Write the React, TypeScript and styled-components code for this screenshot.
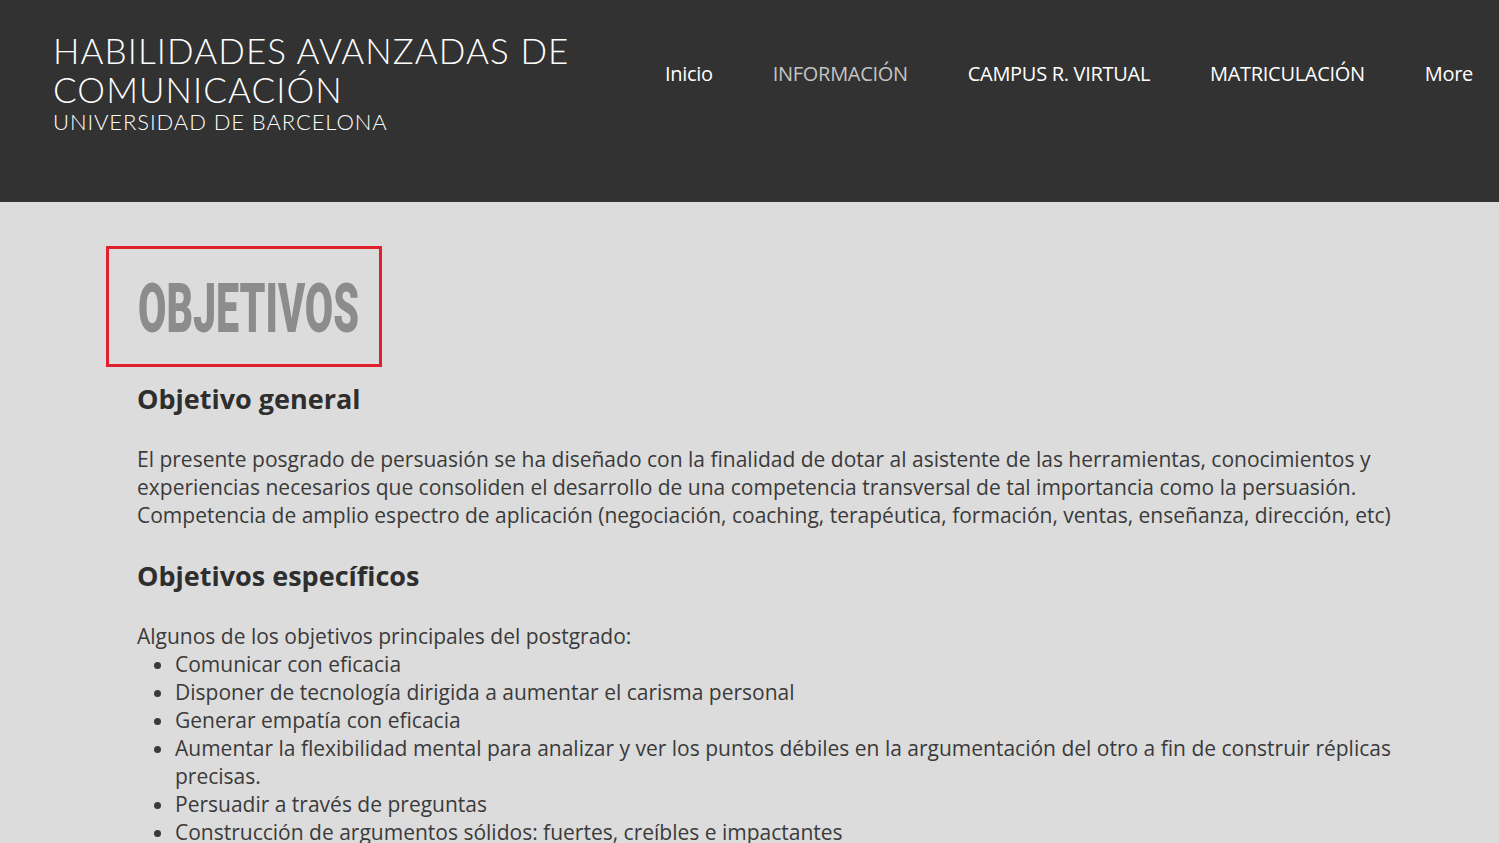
import styled, { createGlobalStyle } from "styled-components";

const GlobalStyle = createGlobalStyle`
  html, body {
    margin: 0;
    padding: 0;
    background: #dcdcdc;
  }
  * {
    box-sizing: border-box;
  }
`;

const navItems = [
  { label: "Inicio", active: false },
  { label: "INFORMACIÓN", active: true },
  { label: "CAMPUS R. VIRTUAL", active: false },
  { label: "MATRICULACIÓN", active: false },
  { label: "More", active: false },
];

const objetivos = [
  "Comunicar con eficacia",
  "Disponer de tecnología dirigida a aumentar el carisma personal",
  "Generar empatía con eficacia",
  "Aumentar la flexibilidad mental para analizar y ver los puntos débiles en la argumentación del otro a fin de construir réplicas precisas.",
  "Persuadir a través de preguntas",
  "Construcción de argumentos sólidos: fuertes, creíbles e impactantes",
];

export default function App() {
  return (
    <>
      <GlobalStyle />
      <Page>
        <Header>
          <Brand>
            <SiteTitle>
              HABILIDADES AVANZADAS DE
              <br />
              COMUNICACIÓN
            </SiteTitle>
            <SiteSubtitle>UNIVERSIDAD DE BARCELONA</SiteSubtitle>
          </Brand>
          <Nav>
            {navItems.map((item) => (
              <NavLink key={item.label} $active={item.active}>
                {item.label}
              </NavLink>
            ))}
          </Nav>
        </Header>

        <Main>
          <TitleBox>
            <BigTitle>OBJETIVOS</BigTitle>
          </TitleBox>

          <Content>
            <Heading>Objetivo general</Heading>
            <Paragraph>
              El presente posgrado de persuasión se ha diseñado con la
              finalidad de dotar al asistente de las herramientas,
              conocimientos y experiencias necesarios que consoliden el
              desarrollo de una competencia transversal de tal importancia
              como la persuasión. Competencia de amplio espectro de aplicación
              (negociación, coaching, terapéutica, formación, ventas,
              enseñanza, dirección, etc)
            </Paragraph>

            <Heading>Objetivos específicos</Heading>
            <Intro>Algunos de los objetivos principales del postgrado:</Intro>
            <List>
              {objetivos.map((o) => (
                <li key={o}>{o}</li>
              ))}
            </List>
          </Content>
        </Main>
      </Page>
    </>
  );
}

const Page = styled.div`
  min-height: 843px;
  background: #dcdcdc;
`;

const Header = styled.header`
  height: 202px;
  background-color: #323232;
  display: flex;
  justify-content: space-between;
  align-items: flex-start;
  padding: 31px 26px 0 53px;
`;

const Brand = styled.div`
  display: flex;
  flex-direction: column;
  color: #ffffff;
  font-family: "Lato", "Open Sans", sans-serif;
  font-weight: 300;
`;

const SiteTitle = styled.h1`
  margin: 0;
  font-size: 35px;
  font-weight: 300;
  line-height: 39px;
  letter-spacing: 1.1px;
`;

const SiteSubtitle = styled.div`
  font-size: 22px;
  line-height: 26px;
  letter-spacing: 0.9px;
  margin-top: 0;
`;

const Nav = styled.nav`
  display: flex;
  gap: 60px;
  padding-top: 28px;
`;

const NavLink = styled.a<{ $active: boolean }>`
  font-family: "Open Sans", sans-serif;
  font-size: 20px;
  letter-spacing: -0.3px;
  line-height: 30px;
  color: ${(p) => (p.$active ? "#c4c4c4" : "#ffffff")};
  cursor: pointer;
  white-space: nowrap;
`;

const Main = styled.main`
  padding: 44px 0 0 106px;
`;

const TitleBox = styled.div`
  width: 276px;
  height: 121px;
  border: 3px solid #e0212b;
  padding: 22px 0 0 29px;
  overflow: hidden;
`;

const BigTitle = styled.h2`
  margin: 0;
  display: inline-block;
  font-family: "Roboto", sans-serif;
  font-weight: 900;
  font-size: 68px;
  line-height: 76px;
  color: #8c8c8c;
  transform: scaleX(0.605);
  transform-origin: left center;
  white-space: nowrap;
`;

const Content = styled.div`
  width: 1290px;
  padding-left: 31px;
  font-family: "Open Sans", sans-serif;
  color: #3a3a3a;
`;

const Heading = styled.h3`
  margin: 12px 0 0;
  font-size: 27px;
  font-weight: 700;
  line-height: 40px;
  color: #2e2e2e;
`;

const Paragraph = styled.p`
  margin: 26px 0 27px;
  font-size: 21px;
  line-height: 28px;
`;

const Intro = styled.p`
  margin: 26px 0 0;
  font-size: 21px;
  line-height: 28px;
`;

const List = styled.ul`
  margin: 0;
  padding-left: 38px;
  font-size: 21px;
  line-height: 28px;
`;
